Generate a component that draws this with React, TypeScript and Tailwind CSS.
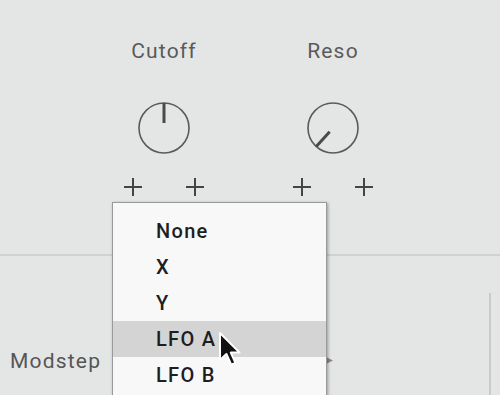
import React from "react";

function Knob({ angle }: { angle: number }) {
  const r = 25;
  const a = (angle * Math.PI) / 180;
  const x1 = 27 + Math.sin(a) * 25;
  const y1 = 27 - Math.cos(a) * 25;
  const x2 = 27 + Math.sin(a) * 5;
  const y2 = 27 - Math.cos(a) * 5;
  return (
    <svg width="54" height="54" viewBox="0 0 54 54">
      <circle cx="27" cy="27" r={r} fill="none" stroke="#5a5a5a" strokeWidth="1.6" />
      <line x1={x1} y1={y1} x2={x2} y2={y2} stroke="#4a4a4a" strokeWidth="3" />
    </svg>
  );
}

function Plus() {
  return (
    <svg width="18" height="18" viewBox="0 0 18 18">
      <path d="M0 9H18M9 0V18" stroke="#444" strokeWidth="2" />
    </svg>
  );
}

function KnobCol({ label, angle }: { label: string; angle: number }) {
  return (
    <div className="flex w-[100px] flex-col items-center">
      <div className="mt-[38px] h-[26px] text-[21px] leading-[26px] tracking-[1.2px] text-[#5a5a5a]">{label}</div>
      <div className="mt-[37px]">
        <Knob angle={angle} />
      </div>
      <div className="mt-[23px] flex w-[80px] justify-between">
        <Plus />
        <Plus />
      </div>
    </div>
  );
}

export default function App() {
  const items = ["None", "X", "Y", "LFO A", "LFO B"];
  return (
    <div
      className="relative h-[395px] w-[500px] overflow-hidden bg-[#e4e6e5]"
      style={{ fontFamily: "Roboto, 'Noto Sans', sans-serif" }}
    >
      <div className="flex h-[256px] gap-[69px] border-b-2 border-[#d0d2d1] pl-[114px]">
        <KnobCol label="Cutoff" angle={0} />
        <KnobCol label="Reso" angle={222} />
      </div>
      <div className="flex h-[139px]">
        <div className="flex flex-1 items-end pb-[22px] pl-[10px]">
          <span className="text-[21px] leading-[24px] tracking-[1.2px] text-[#555]">Modstep</span>
        </div>
        <div className="mr-[9px] mt-[37px] w-[2px] bg-[#c9cbca]" />
      </div>

      {/* small arrow peeking under dropdown */}
      <svg className="absolute left-[324px] top-[356px]" width="10" height="9" viewBox="0 0 10 9">
        <path d="M0 0L9 4.5L0 9Z" fill="#8a8a8a" />
      </svg>

      {/* dropdown menu */}
      <div className="absolute left-[112px] top-[202px] h-[200px] w-[215px] border border-[#9a9a9a] bg-[#f8f8f8] pt-[10px] shadow-[1px_1px_3px_rgba(0,0,0,0.35)]">
        {items.map((it) => (
          <div
            key={it}
            className={
              "flex h-[36px] items-center pl-[43px] text-[20px] font-medium tracking-[1.3px] text-[#1e1e1e] " +
              (it === "LFO A" ? "bg-[#d4d4d4]" : "")
            }
          >
            {it}
          </div>
        ))}
      </div>

      {/* cursor */}
      <svg className="absolute left-[218px] top-[331px]" width="26" height="36" viewBox="0 0 13 18">
        <path
          d="M1 1L1 14.5L4.2 11.5L6.6 16.8L8.7 15.9L6.4 10.8L10.8 10.8Z"
          fill="#111"
          stroke="#fff"
          strokeWidth="1"
          strokeLinejoin="round"
        />
      </svg>
    </div>
  );
}
